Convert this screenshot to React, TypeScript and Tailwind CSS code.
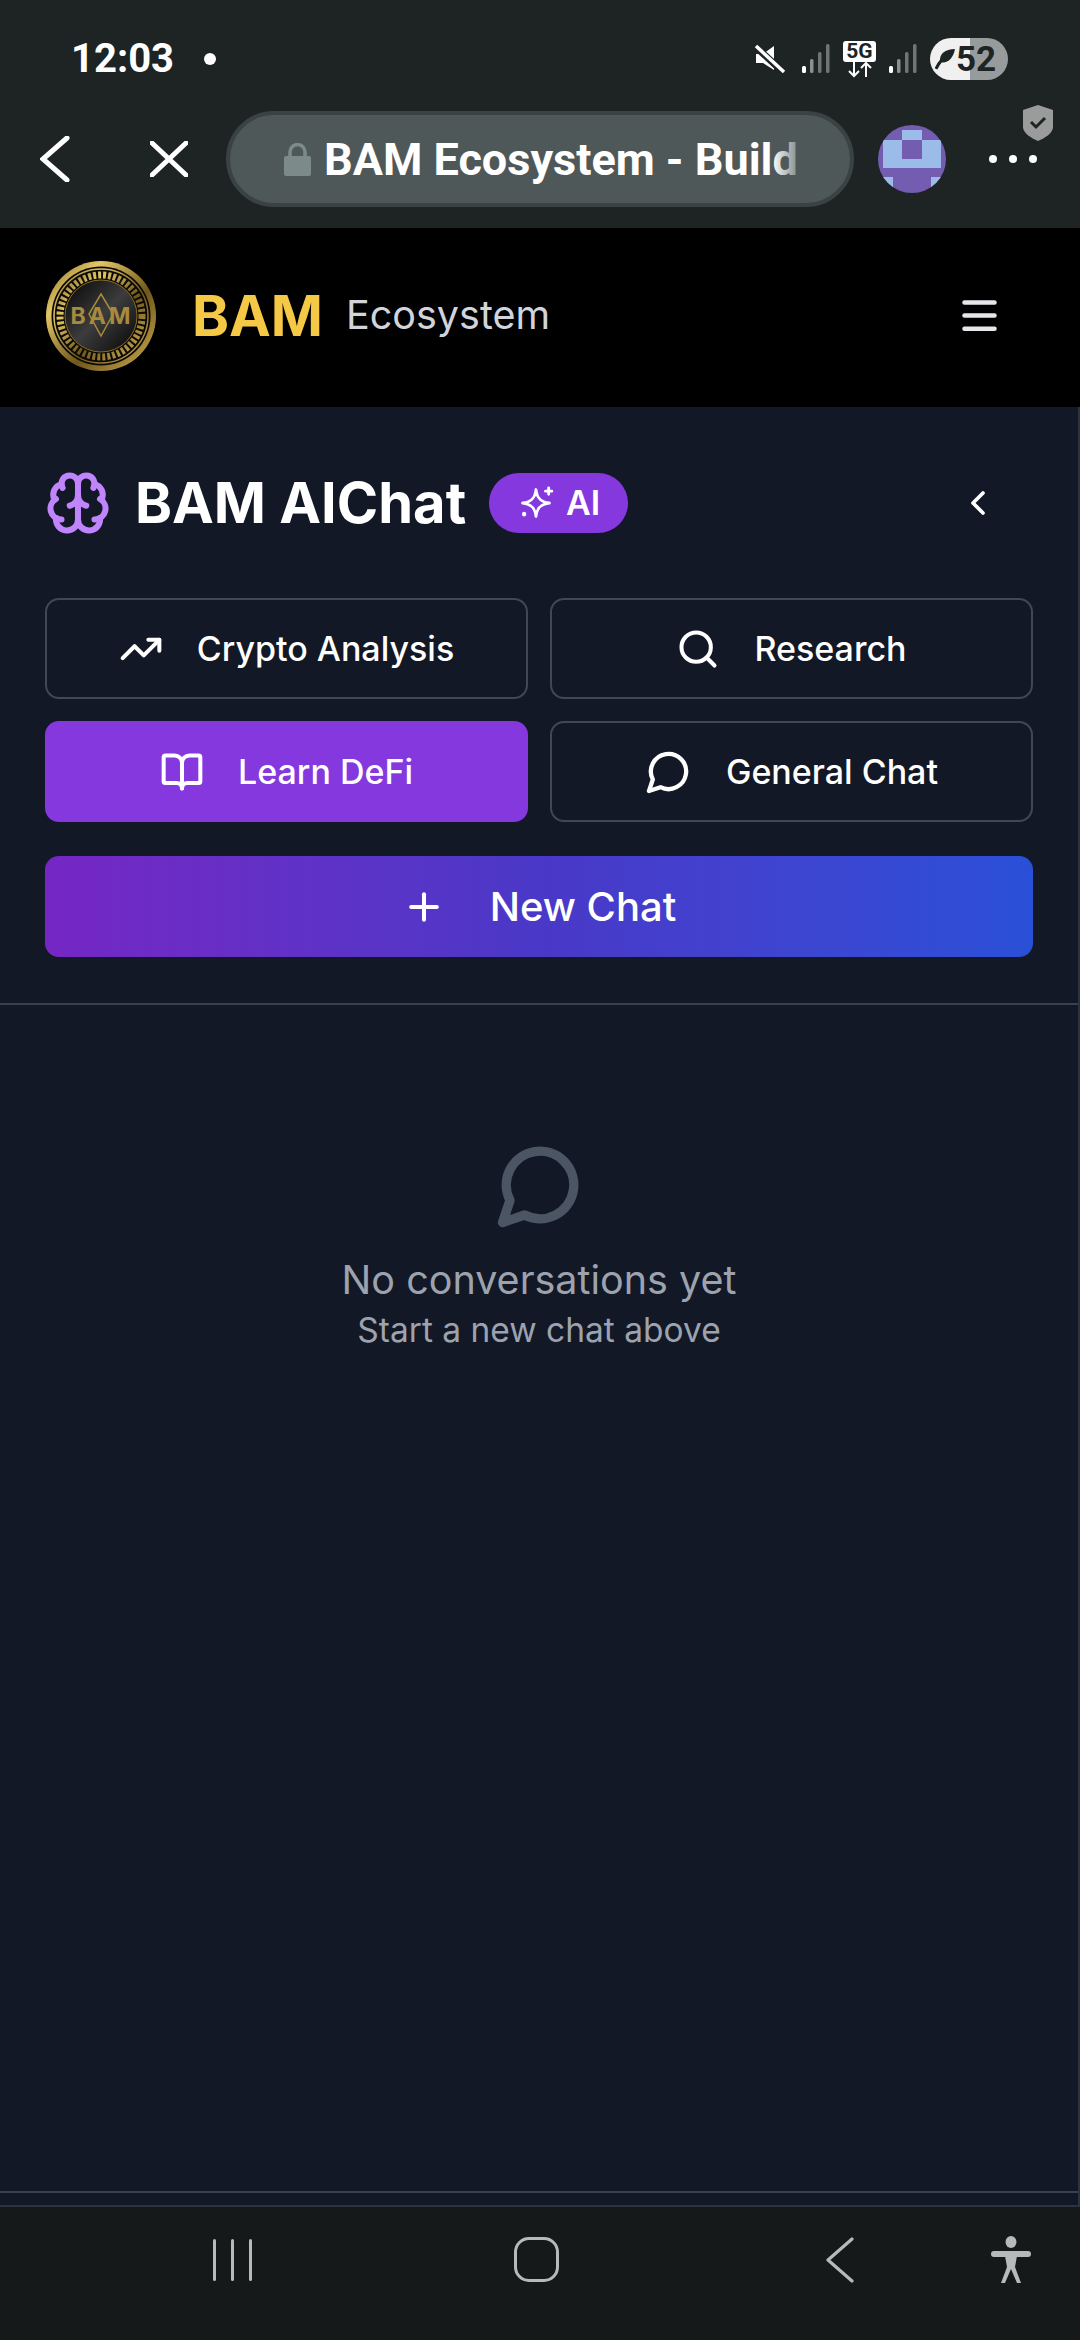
import { Brain, TrendingUp, Search, BookOpen, Plus, ChevronLeft, Menu } from "lucide-react";

function Signal() {
  return (
    <svg width="28" height="30" viewBox="0 0 28 30">
      <rect x="0" y="22" width="4" height="7" rx="1.5" fill="#ffffff" />
      <rect x="8" y="15" width="3.5" height="14" rx="1.5" fill="#8a8f8f" />
      <rect x="16" y="8" width="3.5" height="21" rx="1.5" fill="#6f7575" />
      <rect x="24" y="0" width="3.5" height="29" rx="1.5" fill="#6f7575" />
    </svg>
  );
}

function ChatBubble({ size, stroke, className }: { size: number; stroke: number; className?: string }) {
  return (
    <svg width={size} height={size} viewBox="0 0 24 24" fill="none" stroke="currentColor" strokeWidth={stroke} strokeLinecap="round" strokeLinejoin="round" className={className}>
      <path d="M7.9 20A9 9 0 1 0 4 16.1L2 22Z" />
    </svg>
  );
}

function Logo() {
  return (
    <svg width="112" height="112" viewBox="0 0 112 112">
      <defs>
        <linearGradient id="g" x1="0" y1="0" x2="1" y2="1">
          <stop offset="0" stopColor="#7f6420" />
          <stop offset="0.25" stopColor="#e3c766" />
          <stop offset="0.6" stopColor="#6f561a" />
          <stop offset="1" stopColor="#d2b255" />
        </linearGradient>
        <linearGradient id="c" x1="0" y1="0" x2="1" y2="1">
          <stop offset="0" stopColor="#050505" />
          <stop offset="0.5" stopColor="#3c3c3c" />
          <stop offset="1" stopColor="#050505" />
        </linearGradient>
      </defs>
      <circle cx="56" cy="56" r="55" fill="url(#g)" />
      <circle cx="56" cy="56" r="49.5" fill="#0c0a05" />
      <circle cx="56" cy="56" r="47" fill="none" stroke="url(#g)" strokeWidth="1.5" />
      <circle cx="56" cy="56" r="41" fill="none" stroke="url(#g)" strokeWidth="7" strokeDasharray="3 2" />
      <circle cx="56" cy="56" r="36" fill="url(#c)" stroke="#8a6d24" strokeWidth="1" />
      <path d="M56 34 L68 54 L56 76 L44 54 Z" fill="none" stroke="#a98a3a" strokeWidth="1.5" />
      <text x="57" y="64" textAnchor="middle" fontFamily="Inter, sans-serif" fontWeight="700" fontSize="23" letterSpacing="3" fill="#a88a3e">BAM</text>
    </svg>
  );
}

function Avatar() {
  return (
    <svg width="68" height="68" viewBox="0 0 68 68" className="rounded-full">
      <rect width="68" height="68" fill="#745cb0" />
      <rect x="5" y="15" width="58" height="28" fill="#9bbce8" />
      <rect x="24" y="5" width="20" height="10" fill="#9bbce8" />
      <rect x="24" y="15" width="20" height="19" fill="#745cb0" />
      <rect x="5" y="52" width="10" height="12" fill="#9bbce8" />
      <rect x="53" y="52" width="10" height="12" fill="#9bbce8" />
    </svg>
  );
}

function ActionButton({ icon, label, active }: { icon: React.ReactNode; label: string; active?: boolean }) {
  return (
    <button
      className={
        active
          ? "h-[101px] rounded-[14px] bg-[#8538de] flex items-center justify-center gap-[34px] text-white text-[34px] font-medium"
          : "h-[101px] rounded-[14px] border-2 border-[#414853] flex items-center justify-center gap-[34px] text-white text-[34px] font-medium"
      }
    >
      {icon}
      <span>{label}</span>
    </button>
  );
}

export default function App() {
  return (
    <div className="w-[1080px] h-[2340px] flex flex-col bg-[#121826] overflow-hidden font-['Inter',sans-serif]">
      <div className="h-[228px] bg-[#1e2424] flex flex-col shrink-0">
        <div className="h-[110px] pt-[38px] pl-[71px] pr-[72px] flex items-start justify-between">
          <div className="flex items-center h-[42px] gap-[30px]">
            <span className="font-['Roboto',sans-serif] font-bold text-white text-[40px] leading-none">12:03</span>
            <span className="w-[12px] h-[12px] rounded-full bg-white" />
          </div>
          <div className="flex items-center h-[42px] gap-[13px]">
            <svg width="32" height="30" viewBox="0 0 32 30" className="mr-[3px]">
              <path d="M2 10 H9 L20 2 V26 L9 19 H2 Z" fill="#ffffff" />
              <path d="M2 3 L30 29" stroke="#1e2424" strokeWidth="7" />
              <path d="M2 2 L30 28" stroke="#ffffff" strokeWidth="3.5" />
            </svg>
            <Signal />
            <div className="flex flex-col items-center w-[33px]">
              <span className="bg-white text-[#1e2424] font-['Roboto',sans-serif] font-bold text-[21px] leading-[21px] w-[33px] text-center rounded-[3px]">5G</span>
              <svg width="26" height="16" viewBox="0 0 26 16">
                <path d="M7 0 V14 M2 9 L7 14 L12 9 M19 15 V1 M14 6 L19 1 L24 6" stroke="#ffffff" strokeWidth="2" fill="none" />
              </svg>
            </div>
            <Signal />
            <div className="w-[78px] h-[42px] rounded-full overflow-hidden bg-[linear-gradient(90deg,#f0f0f0_0,#f0f0f0_40px,#979b9b_40px,#979b9b_100%)] flex items-center pl-[5px]">
              <svg width="22" height="24" viewBox="0 0 22 24" className="shrink-0">
                <path d="M20 2 C10 2 4 7 5 15 C12 17 18 12 20 2 Z" fill="#1e2424" />
                <path d="M1 22 C4 15 8 11 13 9" stroke="#1e2424" strokeWidth="3" fill="none" />
              </svg>
              <span className="font-['Roboto',sans-serif] font-bold text-[35px] leading-none text-[#1e2424] -ml-[1px]">52</span>
            </div>
          </div>
        </div>
        <div className="relative flex-1 flex items-center pb-[20px] pl-[40px]">
          <svg width="30" height="46" viewBox="0 0 30 46" className="shrink-0">
            <path d="M27 2 L3 23 L27 44" stroke="#ffffff" strokeWidth="5" fill="none" strokeLinecap="round" strokeLinejoin="miter" />
          </svg>
          <svg width="38" height="36" viewBox="0 0 38 36" className="ml-[80px] shrink-0">
            <path d="M2 2 L36 34 M36 2 L2 34" stroke="#ffffff" strokeWidth="5" strokeLinecap="round" />
          </svg>
          <div className="ml-[38px] w-[628px] h-[96px] shrink-0 rounded-full bg-[#4f5858] border-[4px] border-[#3a4244] flex items-center pl-[54px]">
            <svg width="27" height="33" viewBox="0 0 27 33" className="shrink-0">
              <path d="M6 14 V9 a7.5 7.5 0 0 1 15 0 V14" stroke="#7d8a8a" strokeWidth="3.5" fill="none" />
              <rect x="0" y="13" width="27" height="20" rx="2" fill="#7d8a8a" />
            </svg>
            <span className="relative ml-[13px] font-['Roboto',sans-serif] font-bold text-white text-[45px] leading-none whitespace-nowrap">
              BAM Ecosystem - Build
              <span className="absolute right-0 top-0 bottom-0 w-[26px] bg-gradient-to-r from-transparent to-[#4f5858]/70" />
            </span>
          </div>
          <div className="ml-[24px] shrink-0"><Avatar /></div>
          <div className="ml-[43px] flex gap-[12px] shrink-0">
            <span className="w-[8px] h-[8px] rounded-full bg-white" />
            <span className="w-[8px] h-[8px] rounded-full bg-white" />
            <span className="w-[8px] h-[8px] rounded-full bg-white" />
          </div>
          <svg width="30" height="36" viewBox="0 0 30 36" className="absolute left-[1023px] top-[-5px]">
            <path d="M15 0 L30 5 V22 C30 28 22 33 15 36 C8 33 0 28 0 22 V5 Z" fill="#9a9c9c" />
            <path d="M8 17 L13 22 L22 13" stroke="#1e2424" strokeWidth="3" fill="none" />
          </svg>
        </div>
      </div>

      <div className="h-[179px] bg-black shrink-0 flex items-center pl-[45px] pr-[78px] pb-[4px]">
        <Logo />
        <span className="ml-[35px] text-[#f5c945] font-bold text-[56px] leading-none">BAM</span>
        <span className="ml-[23px] text-[#d1d5db] text-[39.5px] leading-none">Ecosystem</span>
        <Menu className="ml-auto w-[45px] h-[45px] text-[#e5e7eb]" strokeWidth={2.4} />
      </div>

      <div className="flex-1 flex flex-col border-r-2 border-[#2b3340]">
        <div className="px-[45px] pt-[65px] pb-[46px] border-b-2 border-[#374151]">
          <div className="h-[61px] flex items-center">
            <Brain className="w-[66px] h-[66px] text-[#c084fc]" strokeWidth={2.2} />
            <span className="ml-[24px] text-white font-bold text-[56px] leading-none">BAM AIChat</span>
            <div className="ml-[23px] w-[139px] h-[60px] rounded-full bg-[#8538de] flex items-center justify-center gap-[11px] text-white font-semibold text-[34px]">
              <svg width="38" height="38" viewBox="0 0 24 24" fill="none" stroke="currentColor" strokeWidth="1.8" strokeLinecap="round" strokeLinejoin="round">
                <path d="M12 3.5 C12.6 9 15 11.4 20.5 12 C15 12.6 12.6 15 12 20.5 C11.4 15 9 12.6 3.5 12 C9 11.4 11.4 9 12 3.5 Z" />
                <path d="M20 2.5v4M18 4.5h4" />
                <path d="M4.5 18.8v.4" strokeWidth="2.6" />
              </svg>
              <span>AI</span>
            </div>
            <ChevronLeft className="ml-auto mr-[35px] w-[40px] h-[40px] text-white" strokeWidth={2.2} />
          </div>
          <div className="mt-[65px] grid grid-cols-2 gap-x-[22px] gap-y-[22px]">
            <ActionButton icon={<TrendingUp className="w-[44px] h-[44px]" strokeWidth={2.2} />} label="Crypto Analysis" />
            <ActionButton icon={<Search className="w-[44px] h-[44px]" strokeWidth={2.2} />} label="Research" />
            <ActionButton active icon={<BookOpen className="w-[44px] h-[44px]" strokeWidth={2.2} />} label="Learn DeFi" />
            <ActionButton icon={<ChatBubble size={47} stroke={2.2} />} label="General Chat" />
          </div>
          <button className="mt-[34px] w-full h-[101px] rounded-[14px] bg-gradient-to-r from-[#7526c4] via-[#4a38c8] to-[#2a50d8] flex items-center justify-center gap-[44px] text-white text-[40px] font-medium">
            <Plus className="w-[44px] h-[44px]" strokeWidth={2.2} />
            <span>New Chat</span>
          </button>
        </div>

        <div className="flex-1 flex flex-col items-center pt-[135px] border-b-2 border-[#374151]">
          <ChatBubble size={90} stroke={2.5} className="text-[#4b5563] ml-[2px]" />
          <p className="mt-[22px] text-[#9ca3af] text-[39.5px] leading-[56px]">No conversations yet</p>
          <p className="text-[#9ca3af] text-[33.5px] leading-[44px]">Start a new chat above</p>
        </div>
        <div className="h-[12px]" />
      </div>

      <div className="h-[135px] bg-[#151919] border-t-2 border-[#2b3340] shrink-0 flex items-center pb-[28px] pl-[213px]">
        <div className="flex gap-[15px]">
          <span className="w-[3px] h-[42px] rounded-full bg-[#b8baba]" />
          <span className="w-[3px] h-[42px] rounded-full bg-[#b8baba]" />
          <span className="w-[3px] h-[42px] rounded-full bg-[#b8baba]" />
        </div>
        <span className="ml-[262px] w-[45px] h-[45px] rounded-[15px] border-[3px] border-[#b8baba]" />
        <svg width="30" height="46" viewBox="0 0 30 46" className="ml-[266px]">
          <path d="M27 2 L3 23 L27 44" stroke="#b8baba" strokeWidth="3.2" strokeLinecap="round" strokeLinejoin="round" fill="none" />
        </svg>
        <svg width="40" height="48" viewBox="0 0 40 48" className="ml-[136px]">
          <ellipse cx="20" cy="6" rx="5.5" ry="6" fill="#b8baba" />
          <rect x="0" y="15" width="40" height="6" rx="3" fill="#b8baba" />
          <path d="M14 20 H26 L24 31 L30 47 H26 L20 33 L14 47 H10 L16 31 Z" fill="#b8baba" />
        </svg>
      </div>
    </div>
  );
}
